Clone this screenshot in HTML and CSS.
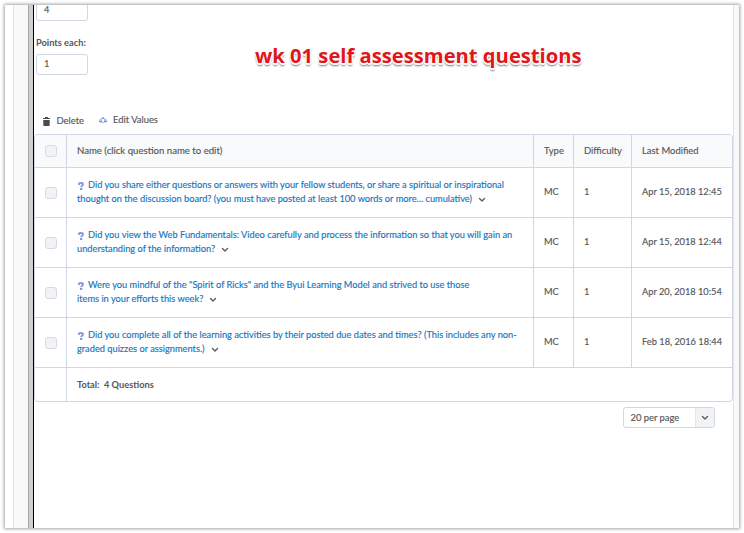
FILE: index.html
```
<!DOCTYPE html>
<html lang="en">
<head>
<meta charset="utf-8">
<title>Question list</title>
<link rel="stylesheet" href="styles.css">
</head>
<body>
<svg class="defs" width="0" height="0">
  <symbol id="chev" viewBox="0 0 8 6"><path d="M1.500 1.500 4 3.900 6.500 1.500" fill="none" stroke="#5a5d5f" stroke-width="1.400" stroke-linecap="round" stroke-linejoin="round"/></symbol>
  <symbol id="help" viewBox="0 0 6 9"><path d="M1 3V1.900Q1 1 3 1T5 2.400C5 3.600 3.200 3.400 3.200 5.300" fill="none" stroke="#8a9ad8" stroke-width="1.900"/><path d="M2 6.100h2.300V8H2z" fill="#8a9ad8"/></symbol>
</svg>
<div class="window">
  <div class="rail"></div>
  <div class="gutter"></div>
  <div class="divider"></div>
  <main class="content">
    <div class="title">wk 01 self assessment questions</div>
    <div class="field field-top">4</div>
    <div class="label">Points each:</div>
    <div class="field">1</div>
    <div class="toolbar">
      <svg class="trash" width="7" height="9" viewBox="0 0 7 9"><path d="M0 1h2V0h3v1h2v1H0zM.3 3h6.400v5q0 1-1 1H1.300q-1 0-1-1z" fill="#494c4e"/></svg>
      <span class="delete">Delete</span>
      <svg class="scale" width="8" height="7" viewBox="0 0 8 7"><path d="M1.500 2.200 4 1.200 6.500 2.200M1.500 2.200.6 4M1.500 2.200 2.600 4M6.500 2.200 5.400 4M6.500 2.200 7.400 4" fill="none" stroke="#6d92cc" stroke-width=".8"/><path d="M3.300.3h1.400v1.400H3.300zM0 4h3.200v.7Q2.700 5.500 1.600 5.500T0 4.700zM4.800 4H8v.7Q7.500 5.500 6.400 5.500T4.800 4.700zM3.200 5h1.600v.8H3.200z" fill="#6a94c8"/></svg>
      <span class="edit">Edit Values</span>
    </div>
    <div class="table">
      <div class="row head">
        <div class="cell check"><i class="box"></i></div>
        <div class="cell name"><span class="hname">Name (click question name to edit)</span></div>
        <div class="cell">Type</div><div class="cell">Difficulty</div><div class="cell">Last Modified</div>
      </div>
      <div class="row">
        <div class="cell check"><i class="box"></i></div>
        <div class="cell name link">
          <div class="line"><svg class="help"><use href="#help"/></svg><span>Did you share either questions or answers with your fellow students, or share a spiritual or inspirational</span></div>
          <div class="line"><span>thought on the discussion board? (you must have posted at least 100 words or more... cumulative)</span><svg class="chev"><use href="#chev"/></svg></div>
        </div>
        <div class="cell">MC</div><div class="cell">1</div><div class="cell date">Apr 15, 2018 12:45</div>
      </div>
      <div class="row">
        <div class="cell check"><i class="box"></i></div>
        <div class="cell name link">
          <div class="line"><svg class="help"><use href="#help"/></svg><span>Did you view the Web Fundamentals: Video carefully and process the information so that you will gain an</span></div>
          <div class="line"><span>understanding of the information?</span><svg class="chev"><use href="#chev"/></svg></div>
        </div>
        <div class="cell">MC</div><div class="cell">1</div><div class="cell date">Apr 15, 2018 12:44</div>
      </div>
      <div class="row">
        <div class="cell check"><i class="box"></i></div>
        <div class="cell name link">
          <div class="line"><svg class="help"><use href="#help"/></svg><span>Were you mindful of the "Spirit of Ricks" and the Byui Learning Model and strived to use those</span></div>
          <div class="line"><span>items in your efforts this week?</span><svg class="chev"><use href="#chev"/></svg></div>
        </div>
        <div class="cell">MC</div><div class="cell">1</div><div class="cell date">Apr 20, 2018 10:54</div>
      </div>
      <div class="row">
        <div class="cell check"><i class="box"></i></div>
        <div class="cell name link">
          <div class="line"><svg class="help"><use href="#help"/></svg><span>Did you complete all of the learning activities by their posted due dates and times? (This includes any non-</span></div>
          <div class="line"><span>graded quizzes or assignments.)</span><svg class="chev"><use href="#chev"/></svg></div>
        </div>
        <div class="cell">MC</div><div class="cell">1</div><div class="cell date">Feb 18, 2016 18:44</div>
      </div>
      <div class="row total">
        <div class="cell check"></div>
        <div class="cell name">Total:&nbsp; 4 Questions</div>
      </div>
    </div>
    <div class="pager"><span class="value">20 per page</span><span class="arrow"><svg class="chev"><use href="#chev"/></svg></span></div>
  </main>
  <div class="edge"></div>
</div>
</body>
</html>
```
FILE: styles.css
```
* { box-sizing: border-box; }
body {
  margin: 0;
  padding: 5px;
  background: #fff;
  color: #54575a;
  font: 9.25px/14px Lato, "Liberation Sans", sans-serif;
  -webkit-text-stroke: .15px currentColor;
  overflow: hidden;
}
.defs { display: block; height: 0; }
.window {
  display: flex;
  width: 734px;
  height: 523px;
  background: #fff;
  box-shadow: 0 0 3px 1px rgba(0, 0, 0, .36);
}
.rail { width: 9px; border-right: 1px solid #e4e4e4; }
.gutter { width: 14px; background: #f9f9f9; }
.divider {
  width: 6px;
  background: #d0cfcf;
  border-left: 1px solid #a5a5a5;
  border-right: 1px solid #000;
}
.content { position: relative; width: 699px; overflow: hidden; white-space: nowrap; }
.edge { width: 6px; background: #f9f9f9; border-left: 1px solid #e4e4e4; }
.title {
  position: absolute;
  left: 221px;
  top: 36px;
  color: #e0161b;
  font: bold 20.2px/28px "Open Sans", "Noto Sans", sans-serif;
  -webkit-text-stroke: 0;
  text-shadow: -1px -1px #fff, 1px -1px #fff, -1px 1px #fff, 1px 1px #fff, 0 2px #fff, 0 0 2px rgba(0, 0, 0, .4), 0 3px 2px rgba(0, 0, 0, .55);
}
.field {
  width: 52px;
  height: 21px;
  margin-left: 2px;
  padding: 2px 7px;
  border: 1px solid #d0d6e4;
  border-radius: 3px;
}
.field-top { margin-top: -5px; }
.label { margin: 15px 0 4px 2px; height: 14px; font-weight: bold; }
.label, .total { -webkit-text-stroke: 0; }
.toolbar { display: flex; height: 14px; margin: 38px 0 0; padding-left: 9px; font-size: 9.4px; }
.trash { margin-top: 4px; }
.delete { margin: 1px 0 0 6.5px; width: 42.5px; }
.scale { margin-top: 4px; }
.edit { margin-left: 6px; }
.table {
  width: 699px;
  height: 268px;
  margin-top: 7px;
  border: 1px solid #d0d6e4;
  border-radius: 4px;
  overflow: hidden;
}
.row {
  display: grid;
  grid-template-columns: 32px 467px 40px 58px 100px;
  height: 50px;
  border-bottom: 1px solid #d0d6e4;
}
.head { height: 33px; background: #f9fafb; font-size: 9.45px; }
.hname { font-size: 9.6px; }
.total { height: 33px; grid-template-columns: 32px 665px; border: 0; font-weight: bold; }
.cell {
  display: flex;
  align-items: center;
  padding: 0 0 2px 10px;
  border-right: 1px solid #d0d6e4;
}
.cell:last-child { border-right: 0; }
.head .cell, .total .cell { padding-bottom: 0; }
.row .check { padding: 0 0 0 10px; }
.row:not(.head) .check { padding-top: 1px; }
.box {
  width: 12px;
  height: 12px;
  background: #f2f3f5;
  border: 1px solid #d6dae4;
  border-radius: 3px;
}
.link { flex-direction: column; align-items: flex-start; justify-content: center; color: #1576bf; }
.line { display: flex; height: 14px; }
.help { width: 6px; height: 9px; margin: 4px 4px 0 1px; }
.chev { width: 8px; height: 6px; margin: 5px 0 0 6px; }
.pager {
  display: flex;
  width: 92px;
  height: 21px;
  margin: 5px 0 0 589px;
  border: 1px solid #d0d6e4;
  border-radius: 3px;
  overflow: hidden;
  font-size: 9.4px;
}
.value { width: 71px; padding: 3px 0 0 6.5px; }
.arrow { width: 19px; background: #f2f3f5; border-left: 1px solid #e3e6ee; }
.arrow .chev { display: block; margin: 7px 0 0 5px; }
```
